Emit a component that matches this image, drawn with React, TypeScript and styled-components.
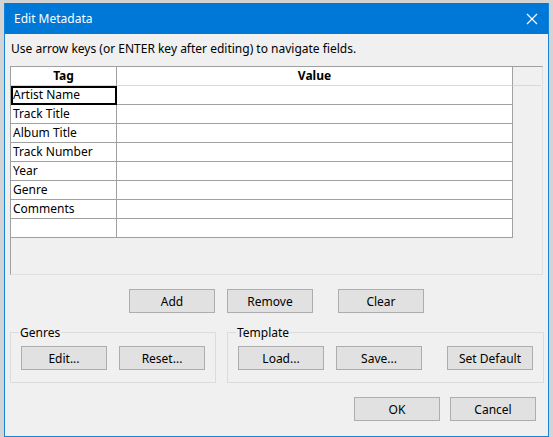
import React from "react";
import styled, { createGlobalStyle } from "styled-components";

const Global = createGlobalStyle`
  html, body { margin: 0; padding: 0; background: #d4d4d4; }
  body { font-family: "Noto Sans", "Segoe UI", sans-serif; font-size: 12px; color: #000; }
`;

const Window = styled.div`
  margin: 3px 0 0 4px;
  width: 545px;
  height: 434px;
  background: #f0f0f0;
  border: 1px solid #1883d7;
  border-top: none;
  box-sizing: border-box;
  display: flex;
  flex-direction: column;
`;
const TitleBar = styled.div`
  height: 31px;
  background: #0078d7;
  color: #fff;
  display: flex;
  align-items: center;
  justify-content: space-between;
  padding: 0 10px 0 9px;
  font-size: 12px;
`;
const Body = styled.div`
  padding: 4px 6px 0 5px;
  display: flex;
  flex-direction: column;
`;
const Hint = styled.div`
  height: 22px;
  line-height: 22px;
  padding-left: 1px;
`;
const Grid = styled.div`
  margin-top: 6px;
  height: 209px;
  width: 533px;
  border: 1px solid #a0a0a0;
  border-right-color: #e0e0e0;
  border-bottom-color: #e0e0e0;
  background: #f0f0f0;
  box-sizing: border-box;
`;
const Table = styled.div`
  display: grid;
  grid-template-columns: 106px 396px 28px;
`;
const Head = styled.div<{ $blank?: boolean }>`
  height: 18px;
  line-height: 18px;
  text-align: center;
  font-weight: bold;
  background: #fff;
  border-right: 1px solid #a0a0a0;
  border-bottom: 1px solid #d8d8d8;
  ${(p) => (p.$blank ? "background:#f0f0f0; border-right:none;" : "")}
`;
const Cell = styled.div<{ $focus?: boolean }>`
  height: 18px;
  line-height: 18px;
  padding-left: 2px;
  background: #fff;
  border-right: 1px solid #a0a0a0;
  border-bottom: 1px solid #a0a0a0;
  white-space: nowrap;
  overflow: hidden;
  ${(p) => (p.$focus ? "outline: 2px solid #000; outline-offset: -2px;" : "")}
`;
const Filler = styled.div``;
const Row = styled.div<{ $justify?: string; $gap?: number }>`
  display: flex;
  gap: ${(p) => p.$gap ?? 12}px;
  justify-content: ${(p) => p.$justify ?? "flex-start"};
`;
const Btn = styled.button<{ $ml?: number }>`
  width: 86px;
  height: 24px;
  background: #e1e1e1;
  border: 1px solid #adadad;
  font: inherit;
  color: #000;
  padding: 0;
  margin-left: ${(p) => p.$ml ?? 0}px;
`;
const Group = styled.fieldset<{ $w: number }>`
  width: ${(p) => p.$w}px;
  margin: 0;
  box-sizing: border-box;
  border: 1px solid #dcdcdc;
  padding: 5px 10px 8px 10px;
  height: 59px;
  position: relative;
  top: -7px;
  legend { padding: 0 1px; margin-left: -2px; }
`;

const tags = ["Artist Name", "Track Title", "Album Title", "Track Number", "Year", "Genre", "Comments", ""];

export default function App() {
  return (
    <>
      <Global />
      <Window>
        <TitleBar>
          <span>Edit Metadata</span>
          <svg width="12" height="12" viewBox="0 0 12 12">
            <path d="M1 1L11 11M11 1L1 11" stroke="#fff" strokeWidth="1.2" />
          </svg>
        </TitleBar>
        <Body>
          <Hint>Use arrow keys (or ENTER key after editing) to navigate fields.</Hint>
          <Grid>
            <Table>
              <Head>Tag</Head>
              <Head>Value</Head>
              <Head $blank />
              {tags.map((t, i) => (
                <React.Fragment key={i}>
                  <Cell $focus={i === 0}>{t}</Cell>
                  <Cell />
                  <Filler />
                </React.Fragment>
              ))}
            </Table>
          </Grid>
          <Row style={{ marginTop: 14, paddingLeft: 119 }}>
            <Btn>Add</Btn>
            <Btn>Remove</Btn>
            <Btn $ml={13}>Clear</Btn>
          </Row>
          <Row style={{ marginTop: 18 }} $gap={11}>
            <Group $w={205}>
              <legend>Genres</legend>
              <Row>
                <Btn>Edit...</Btn>
                <Btn>Reset...</Btn>
              </Row>
            </Group>
            <Group $w={318}>
              <legend>Template</legend>
              <Row>
                <Btn>Load...</Btn>
                <Btn>Save...</Btn>
                <Btn $ml={13}>Set Default</Btn>
              </Row>
            </Group>
          </Row>
          <Row $justify="flex-end" $gap={10} style={{ marginTop: 7, paddingRight: 6 }}>
            <Btn>OK</Btn>
            <Btn>Cancel</Btn>
          </Row>
        </Body>
      </Window>
    </>
  );
}
